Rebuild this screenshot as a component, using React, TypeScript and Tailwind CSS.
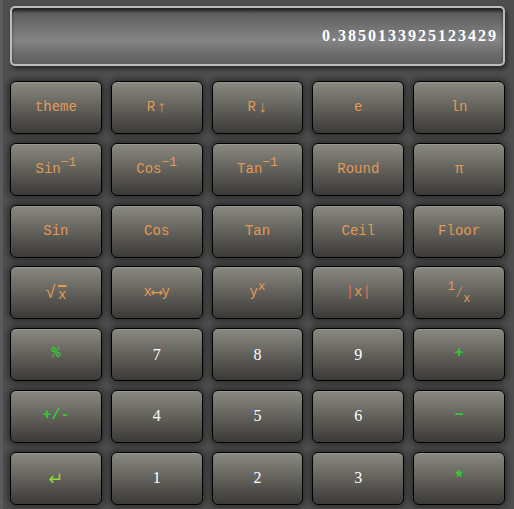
import type { ReactNode } from "react";

type Key = {
  label: ReactNode;
  tone: "fn" | "num" | "op" | "enter";
};

const sup = (t: string) => <sup className="align-super text-[13px] leading-none">{t}</sup>;

const keys: Key[] = [
  { label: "theme", tone: "fn" },
  { label: <>R<span className="ml-[2px] text-[16px]">↑</span></>, tone: "fn" },
  { label: <>R<span className="ml-[2px] text-[16px]">↓</span></>, tone: "fn" },
  { label: "e", tone: "fn" },
  { label: "ln", tone: "fn" },
  { label: <>Sin{sup("−1")}</>, tone: "fn" },
  { label: <>Cos{sup("−1")}</>, tone: "fn" },
  { label: <>Tan{sup("−1")}</>, tone: "fn" },
  { label: "Round", tone: "fn" },
  { label: "π", tone: "fn" },
  { label: "Sin", tone: "fn" },
  { label: "Cos", tone: "fn" },
  { label: "Tan", tone: "fn" },
  { label: "Ceil", tone: "fn" },
  { label: "Floor", tone: "fn" },
  {
    label: (
      <span className="flex items-end gap-[2px]">
        <span className="text-[18px] leading-none">√</span>
        <span className="overline decoration-2 leading-none">x</span>
      </span>
    ),
    tone: "fn",
  },
  { label: <>x<span className="text-[16px] leading-none">⟷</span>y</>, tone: "fn" },
  { label: <>y{sup("x")}</>, tone: "fn" },
  { label: <><span className="text-[#d9735a]">|</span>x<span className="text-[#d9735a]">|</span></>, tone: "fn" },
  {
    label: (
      <span className="flex h-[24px] items-center">
        <span className="self-start text-[12px] leading-none">1</span>
        <span className="text-[14px] leading-none">⁄</span>
        <span className="self-end text-[12px] leading-none">x</span>
      </span>
    ),
    tone: "fn",
  },
  { label: "%", tone: "op" },
  { label: "7", tone: "num" },
  { label: "8", tone: "num" },
  { label: "9", tone: "num" },
  { label: "+", tone: "op" },
  { label: "+/-", tone: "op" },
  { label: "4", tone: "num" },
  { label: "5", tone: "num" },
  { label: "6", tone: "num" },
  { label: "−", tone: "op" },
  { label: "↵", tone: "enter" },
  { label: "1", tone: "num" },
  { label: "2", tone: "num" },
  { label: "3", tone: "num" },
  { label: <span className="text-[18px]">*</span>, tone: "op" },
];

const toneClass: Record<Key["tone"], string> = {
  fn: "text-[#e39a55] text-[14px] font-['Liberation_Mono',monospace]",
  num: "text-white text-[16px] font-['Liberation_Serif',serif]",
  op: "text-[#33cc33] text-[15px] font-bold font-['Liberation_Mono',monospace]",
  enter: "text-[#8fd63a] text-[18px] font-['DejaVu_Sans',sans-serif]",
};

function CalcKey({ k }: { k: Key }) {
  return (
    <button
      className={`flex h-[53px] items-center justify-center rounded-[6px] border border-black bg-[linear-gradient(to_bottom,#8a8981_0%,#6a6963_40%,#4a4945_80%,#3b3a36_100%)] shadow-[0_0_6px_2px_rgba(0,0,0,0.45),inset_0_1px_0_rgba(255,255,255,0.12)] ${toneClass[k.tone]}`}
    >
      {k.label}
    </button>
  );
}

export default function App() {
  return (
    <div className="flex h-[509px] w-[514px] flex-col overflow-hidden border-l-[3px] border-[#5b5b5b] bg-[#4e4e4e] pl-[7px] pr-[9px] pt-[6px]">
      {/* display */}
      <div className="flex h-[60px] items-center justify-end rounded-[5px] border-2 border-[#bdbdbd] bg-[linear-gradient(to_bottom,#4a4a4a_0%,#5e5e5e_10%,#727272_35%,#848484_58%,#6e6e6e_80%,#5e5e5e_100%)] pr-[5px] shadow-[2px_3px_4px_rgba(0,0,0,0.5),inset_0_3px_3px_rgba(0,0,0,0.55)]">
        <span className="font-['Liberation_Serif',serif] text-[16px] font-bold tracking-[2px] text-white">
          0.3850133925123429
        </span>
      </div>

      {/* keypad */}
      <div className="mt-[15px] grid grid-cols-5 gap-x-[9px] gap-y-[8.8px]">
        {keys.map((k, i) => (
          <CalcKey key={i} k={k} />
        ))}
      </div>
    </div>
  );
}
